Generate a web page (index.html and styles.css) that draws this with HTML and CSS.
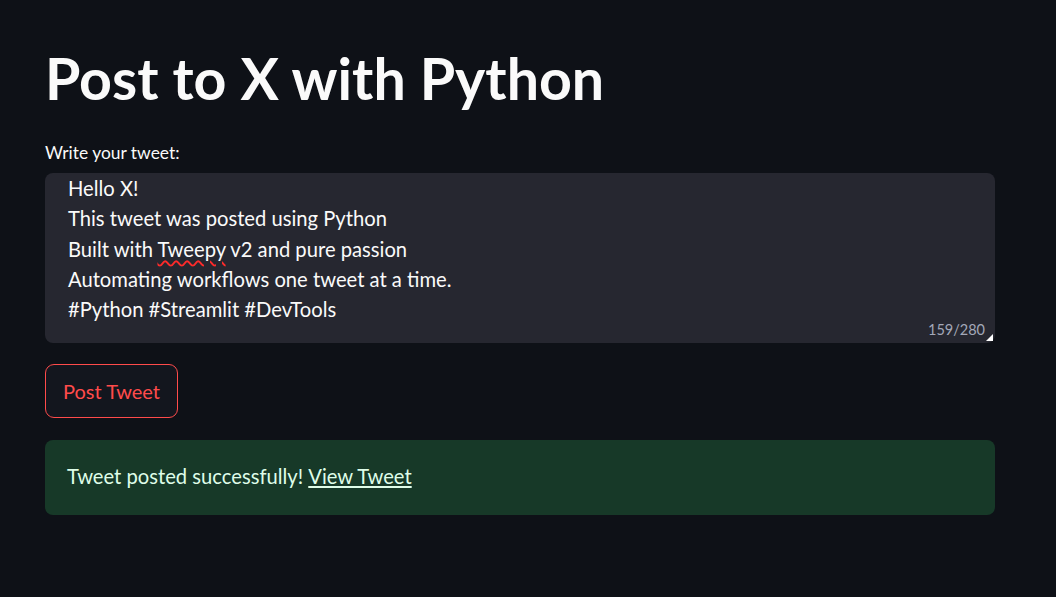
FILE: index.html
```html
<!DOCTYPE html>
<html lang="en">
<head>
<meta charset="utf-8">
<title>Post to X with Python</title>
<link rel="stylesheet" href="styles.css">
</head>
<body>
<main class="main">
  <h1 class="title">Post to X with Python</h1>
  <div class="field">
    <label class="label">Write your tweet:</label>
    <div class="textarea">
      <div class="text">
        <div>Hello X!</div>
        <div>This tweet was posted using Python</div>
        <div>Built with <span class="typo">Tweepy</span> v2 and pure passion</div>
        <div>Automating workflows one tweet at a time.</div>
        <div>#Python #Streamlit #DevTools</div>
      </div>
      <div class="counter">159/280</div>
      <span class="grip"></span>
    </div>
  </div>
  <button class="btn">Post Tweet</button>
  <div class="alert">Tweet posted successfully! <a href="#" class="link">View Tweet</a></div>
</main>
</body>
</html>
```
FILE: styles.css
```css
html, body {
  margin: 0;
  padding: 0;
  background: #0e1117;
  color: #fafafa;
  font-family: Lato, "Liberation Sans", sans-serif;
}
.main {
  width: 950px;
  padding: 44px 0 0 45px;
  display: flex;
  flex-direction: column;
}
.title {
  margin: 0;
  font-size: 57.3px;
  font-weight: 700;
  line-height: 68px;
  color: #fafafa;
}
.field {
  margin-top: 29px;
  display: flex;
  flex-direction: column;
}
.label {
  font-size: 17.4px;
  line-height: 24px;
  color: #fafafa;
  margin-bottom: 8px;
}
.textarea {
  position: relative;
  height: 170px;
  background: #262730;
  border-radius: 8px;
  box-sizing: border-box;
  padding: 0 23px;
}
.text {
  font-size: 20.2px;
  line-height: 30.3px;
  color: #fafafa;
}
.typo {
  text-decoration: underline wavy #ff2a2a;
  text-decoration-thickness: 1.5px;
  text-underline-offset: 3px;
}
.counter {
  position: absolute;
  right: 10px;
  bottom: 5px;
  font-size: 14.5px;
  color: #a3a8b8;
}
.grip {
  position: absolute;
  right: 2px;
  bottom: 2px;
  width: 0;
  height: 0;
  border-left: 7px solid transparent;
  border-bottom: 7px solid #ffffff;
}
.btn {
  align-self: flex-start;
  margin-top: 21px;
  width: 133px;
  height: 54px;
  padding: 0;
  background: #13161e;
  border: 1px solid #ff4b4b;
  border-radius: 9px;
  color: #ff4b4b;
  font-family: inherit;
  font-size: 20px;
}
.alert {
  margin-top: 22px;
  height: 75px;
  box-sizing: border-box;
  padding: 0 22px 3px;
  display: flex;
  align-items: center;
  background: #173928;
  border-radius: 8px;
  color: #dffde9;
  font-size: 20.2px;
  white-space: pre;
}
.link {
  color: #dffde9;
  text-decoration: underline;
}
```
